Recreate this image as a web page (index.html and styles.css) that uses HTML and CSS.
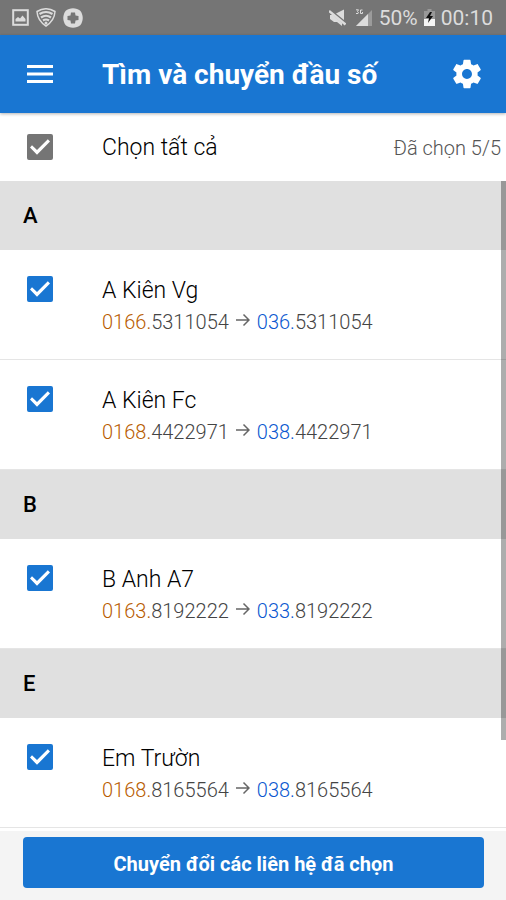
FILE: index.html
```html
<!DOCTYPE html>
<html lang="vi">
<head>
<meta charset="utf-8">
<meta name="viewport" content="width=device-width, initial-scale=1">
<title>Tìm và chuyển đầu số</title>
<link rel="stylesheet" href="styles.css">
</head>
<body>
<div class="app">
  <div class="status">
    <div class="status-group status-left">
      <svg width="17" height="17" viewBox="0 0 17 17" aria-hidden="true"><rect x="1.2" y="1.2" width="14.6" height="14.6" fill="none" stroke="currentColor" stroke-width="2"/><path d="M3.500 12.500V10l2.500-2 2 1.500 2.500-3 3 3.500v2.500z" fill="currentColor"/></svg>
      <svg width="20" height="19" viewBox="0 0 20 19" aria-hidden="true"><path d="M1 3.500Q10-2 19 3.500Q18.500 12.500 10 18Q1.500 12.500 1 3.500z" fill="none" stroke="currentColor" stroke-width="1.500"/><path d="M3.500 6Q10 2 16.500 6M5 9.500Q10 6 15 9.500M7 12.500Q10 10.500 13 12.500" fill="none" stroke="currentColor" stroke-width="2.200"/><circle cx="10" cy="15" r="1.500" fill="currentColor"/></svg>
      <svg width="20" height="20" viewBox="0 0 20 20" aria-hidden="true"><path fill="currentColor" fill-rule="evenodd" d="M6 1Q10-.5 14 1Q18 2 19 6Q20.500 10 19 14Q18 18 14 19Q10 20.500 6 19Q2 18 1 14Q-.5 10 1 6Q2 2 6 1zM8 4.500L7.500 7.500L4.500 8v4l3 .5L8 15.500h4l.5-3L15.500 12V8l-3-.5L12 4.500z"/></svg>
    </div>
    <div class="status-group status-right">
      <svg class="mute" width="17" height="17" viewBox="0 0 17 17" aria-hidden="true"><path d="M1 6h3l9 8v3L8 13H5L1 10zM7 4.500L15 .5v10.500z" fill="currentColor"/><path d="M0 2L16.500 15.500" stroke="currentColor" stroke-width="2.500"/></svg>
      <svg class="signal" width="18" height="18" viewBox="0 0 18 18" aria-hidden="true"><path d="M17 1v16H1z" fill="#9b9b9b"/><path d="M13 5v12H1z" fill="currentColor"/><path d="M1 .8h2.500L2.500 2.500Q4 3 3 4.500H1M7.500 1H5.500v3.500h2V3" fill="none" stroke="currentColor"/></svg>
      <span>50%</span>
      <svg class="battery" width="11" height="17" viewBox="0 0 11 17" aria-hidden="true"><path d="M3.500 0h4v2H11v15H0V2h3.500z" fill="#999"/><path d="M0 10h11v7H0z" fill="#f5f5f5"/><path d="M6 3L2 9h3l-1 5 5-7H6l2-4z" fill="#111"/></svg>
      <span>00:10</span>
    </div>
  </div>

  <header class="header">
    <button class="icon-button" type="button" aria-label="Menu">
      <svg width="26" height="18" viewBox="0 0 26 18" aria-hidden="true"><path d="M0 1.500h26M0 9h26M0 16.500h26" stroke="currentColor" stroke-width="3"/></svg>
    </button>
    <h1 class="title">Tìm và chuyển đầu số</h1>
    <button class="icon-button" type="button" aria-label="Cài đặt">
      <svg width="34" height="34" viewBox="0 0 24 24" aria-hidden="true"><path fill="currentColor" d="M19.430 12.980c.04-.32.07-.64.07-.98s-.03-.66-.07-.98l2.110-1.650c.19-.15.24-.42.12-.64l-2-3.460c-.12-.22-.39-.3-.61-.22l-2.490 1c-.52-.4-1.080-.73-1.690-.98l-.38-2.650C14.460 2.180 14.250 2 14 2h-4c-.25 0-.46.18-.49.42l-.38 2.650c-.61.25-1.170.59-1.690.98l-2.490-1c-.23-.09-.49 0-.61.22l-2 3.460c-.13.22-.07.49.12.64l2.110 1.650c-.04.32-.07.65-.07.98s.03.66.07.98l-2.110 1.650c-.19.15-.24.42-.12.64l2 3.460c.12.22.39.3.61.22l2.490-1c.52.4 1.080.73 1.690.98l.38 2.650c.03.24.24.42.49.42h4c.25 0 .46-.18.49-.42l.38-2.650c.61-.25 1.170-.59 1.690-.98l2.490 1c.23.09.49 0 .61-.22l2-3.460c.12-.22.07-.49-.12-.64l-2.110-1.650zM12 15.500c-1.930 0-3.500-1.570-3.500-3.500s1.570-3.500 3.500-3.500 3.500 1.570 3.500 3.500-1.570 3.500-3.500 3.500z"/></svg>
    </button>
  </header>

  <div class="select-all">
    <input class="check check-all" type="checkbox" id="all" checked>
    <label class="name" for="all">Chọn tất cả</label>
    <span class="count">Đã chọn 5/5</span>
  </div>

  <main class="list">
    <h2 class="section">A</h2>
    <div class="contact">
      <input class="check" type="checkbox" id="c1" checked>
      <label class="details" for="c1">
        <span class="name">A Kiên Vg</span>
        <span class="numbers"><span><span class="old">0166.</span>5311054</span><svg class="arrow" width="14" height="14" viewBox="0 0 14 14" aria-hidden="true"><path d="M0 7h13M7.500 1.500L13 7l-5.500 5.500"/></svg><span><span class="new">036.</span>5311054</span></span>
      </label>
    </div>
    <div class="contact">
      <input class="check" type="checkbox" id="c2" checked>
      <label class="details" for="c2">
        <span class="name">A Kiên Fc</span>
        <span class="numbers"><span><span class="old">0168.</span>4422971</span><svg class="arrow" width="14" height="14" viewBox="0 0 14 14" aria-hidden="true"><path d="M0 7h13M7.500 1.500L13 7l-5.500 5.500"/></svg><span><span class="new">038.</span>4422971</span></span>
      </label>
    </div>
    <h2 class="section">B</h2>
    <div class="contact">
      <input class="check" type="checkbox" id="c3" checked>
      <label class="details" for="c3">
        <span class="name">B Anh A7</span>
        <span class="numbers"><span><span class="old">0163.</span>8192222</span><svg class="arrow" width="14" height="14" viewBox="0 0 14 14" aria-hidden="true"><path d="M0 7h13M7.500 1.500L13 7l-5.500 5.500"/></svg><span><span class="new">033.</span>8192222</span></span>
      </label>
    </div>
    <h2 class="section">E</h2>
    <div class="contact">
      <input class="check" type="checkbox" id="c4" checked>
      <label class="details" for="c4">
        <span class="name">Em Trườn</span>
        <span class="numbers"><span><span class="old">0168.</span>8165564</span><svg class="arrow" width="14" height="14" viewBox="0 0 14 14" aria-hidden="true"><path d="M0 7h13M7.500 1.500L13 7l-5.500 5.500"/></svg><span><span class="new">038.</span>8165564</span></span>
      </label>
    </div>
    <div class="scroll-thumb"></div>
  </main>

  <footer class="footer">
    <button class="convert" type="button">Chuyển đổi các liên hệ đã chọn</button>
  </footer>
</div>
</body>
</html>
```
FILE: styles.css
```css
* {
  box-sizing: border-box;
}

body {
  margin: 0;
  background: #fff;
  color: #000;
  font-family: Roboto, "Noto Sans", sans-serif;
}

svg {
  display: block;
  flex: none;
}

.app {
  display: flex;
  flex-direction: column;
  min-height: 100vh;
}

.status {
  display: flex;
  justify-content: space-between;
  align-items: center;
  height: 35px;
  padding: 0 13px 0 12px;
  background: #757575;
  color: #dcdcdc;
  font-size: 21px;
  line-height: 24px;
}

.status-group {
  display: flex;
  align-items: center;
}

.status-left {
  gap: 7px;
}

.status-right {
  gap: 6px;
}

.mute {
  margin-right: 3px;
}

.header {
  position: relative;
  z-index: 1;
  display: flex;
  align-items: center;
  height: 78px;
  padding: 0 22px 0 27px;
  background: #1976d2;
  color: #fff;
  box-shadow: 0 1px 3px rgba(0, 0, 0, 0.3);
}

.icon-button {
  display: flex;
  padding: 0;
  border: 0;
  background: none;
  color: inherit;
}

.title {
  flex: 1;
  margin: 0;
  padding: 2px 0 0 49px;
  font-size: 28px;
  line-height: 32px;
  font-weight: 700;
}

.select-all {
  display: flex;
  align-items: center;
  height: 68px;
  padding: 0 5px 0 27px;
}

.select-all .name {
  flex: 1;
  padding: 2px 0 0 49px;
}

.count {
  padding-top: 2px;
  color: #555;
  font-size: 20px;
  font-weight: 300;
  line-height: 24px;
}

.check {
  flex: none;
  display: grid;
  place-items: center;
  width: 26px;
  height: 26px;
  margin: 0;
  appearance: none;
  border: 2px solid #1976d2;
  border-radius: 2px;
}

.check-all {
  border-color: #757575;
}

.check:checked {
  background: #1976d2;
}

.check-all:checked {
  background: #757575;
}

.check:checked::before {
  content: "";
  width: 20px;
  height: 16px;
  background: #fff;
  clip-path: polygon(0 53%, 10% 39%, 35% 69%, 89% 1%, 100% 15%, 35% 99%);
}

.name {
  font-size: 23px;
  font-weight: 300;
  line-height: 30px;
}

.list {
  position: relative;
  flex: 1;
  overflow: hidden;
}

.section {
  margin: 0;
  padding: 21px 23px 20px;
  background: #e0e0e0;
  font-size: 22px;
  line-height: 28px;
  font-weight: 500;
}

.contact {
  display: flex;
  align-items: flex-start;
  padding: 26px 27px 24px;
  border-bottom: 1px solid #e5e5e5;
}

.details {
  display: flex;
  flex-direction: column;
  gap: 3px;
  margin-left: 49px;
}

.numbers {
  display: flex;
  align-items: center;
  gap: 7px;
  color: #444;
  font-size: 20px;
  font-weight: 300;
  line-height: 26px;
}

.old {
  color: #b85c00;
}

.new {
  color: #0b58d0;
}

.arrow {
  margin-bottom: 4px;
  fill: none;
  stroke: #666;
  stroke-width: 1.5;
}

.scroll-thumb {
  position: absolute;
  top: 0;
  right: 0;
  width: 5px;
  height: 86%;
  background: rgba(0, 0, 0, 0.32);
}

.footer {
  padding: 6px 22px 12px 23px;
  background: #f4f4f4;
}

.convert {
  width: 100%;
  height: 51px;
  padding: 2px 0 0;
  border: 0;
  border-radius: 4px;
  background: #1976d2;
  color: #fff;
  font: 700 20px/24px Roboto, "Noto Sans", sans-serif;
}
```
